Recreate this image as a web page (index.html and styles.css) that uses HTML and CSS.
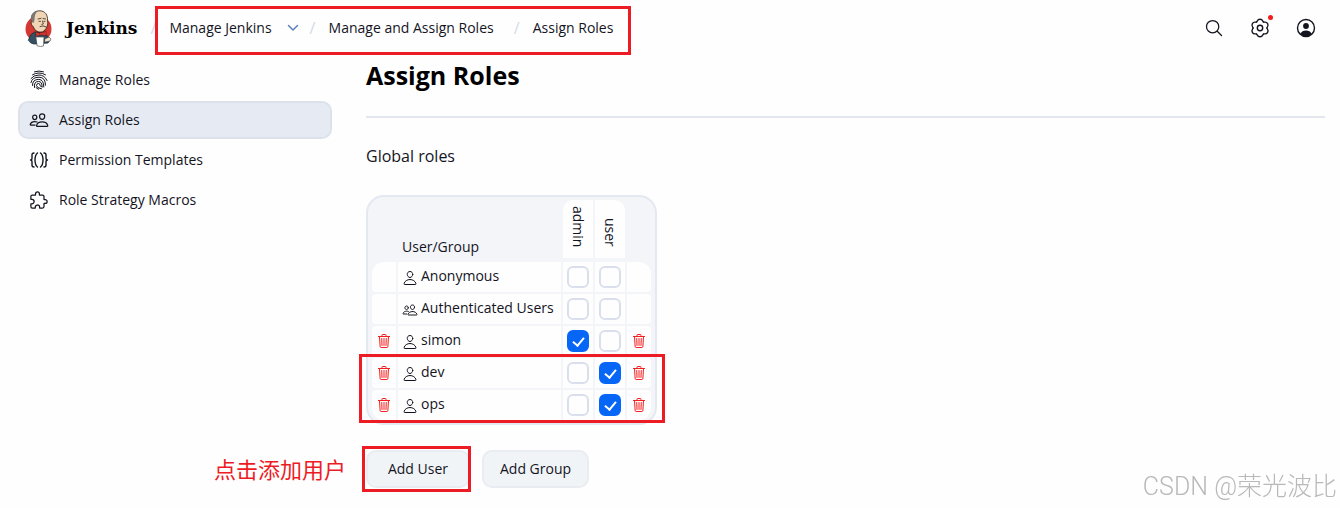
FILE: index.html
```
<!DOCTYPE html>
<html lang="en">
<head>
    <meta charset="UTF-8">
    <meta name="viewport" content="width=device-width, initial-scale=1.0">
    <title>Assign Roles - Jenkins</title>
    <link rel="stylesheet" href="styles.css">
</head>
<body>
    <!-- Shared icons -->
    <svg class="sprite" aria-hidden="true">
        <symbol id="person" viewBox="0 0 512 512">
            <path d="M344 144c-3.92 52.87-44 96-88 96s-84.15-43.12-88-96c-4-55 35-96 88-96s92 42 88 96z"/>
            <path d="M256 304c-87 0-175.3 48-191.64 138.6C62.39 453.52 68.57 464 80 464h352c11.44 0 17.62-10.48 15.65-21.4C431.3 352 343 304 256 304z"/>
        </symbol>
        <symbol id="people" viewBox="0 0 512 512">
            <path d="M402 168c-2.93 40.67-33.1 72-66 72s-63.12-31.32-66-72c-3-42.31 26.37-72 66-72s69 30.46 66 72z"/>
            <path d="M336 304c-65.17 0-127.84 32.37-143.54 95.41-2.08 8.34 3.15 16.59 11.72 16.59h263.65c8.57 0 13.77-8.25 11.72-16.59C463.85 335.36 401.18 304 336 304z"/>
            <path d="M200 185.94c-2.34 32.48-26.72 58.06-53 58.06s-50.7-25.57-53-58.06C91.61 152.15 115.34 128 147 128s55.39 24.77 53 57.94z"/>
            <path d="M206 306c-18.05-8.27-37.93-11.45-59-11.45-52 0-102.1 25.85-114.65 76.2-1.65 6.66 2.53 13.25 9.37 13.25H154"/>
        </symbol>
        <symbol id="trash" viewBox="0 0 512 512">
            <path d="M112 112l20 320c.95 18.49 14.4 32 32 32h184c17.67 0 30.87-13.51 32-32l20-320"/>
            <path d="M80 112h352M192 112V72a23.93 23.93 0 0124-24h80a23.93 23.93 0 0124 24v40M256 176v224M184 176l8 224M328 176l-8 224"/>
        </symbol>
        <symbol id="tooth" viewBox="0 0 20 20">
            <path d="M6.500 3.940C7.600 3.600 6.900 1.200 10 1.200S12.400 3.600 13.500 3.940"/>
        </symbol>
    </svg>

    <header class="header">
        <a class="brand" href="#">
            <svg class="logo" viewBox="0 0 27 37" aria-hidden="true">
                <circle cx="13.5" cy="19" r="13" fill="#d33833"/>
                <path d="M3.500 30l2-5 4-3 8 1 5 3 2.500 4-2 3-14 1-3-1z" fill="#335061" stroke="#1d2b35" stroke-width=".8"/>
                <path d="M6.500 11C5 4 10 .6 15 .8c5 .2 8 4 7.500 10 1 4-1 9-5 11-4 1-8-1-9-5-2-1-3-4-2-5.800z" fill="#f0d6b7" stroke="#2b2119" stroke-width=".8"/>
                <path d="M6.600 12C5 5 8 1 13 1 10 3 9.500 6 9.500 10l-1 3z" fill="#7b7772"/>
                <path d="M13 9l3-.7M18 8.500l2.500.5M14 11.300h1.500M19 11.300h1M17.500 11l.8 3-1.500.5M15 16.500q3-1.500 6 .3" fill="none" stroke="#4a3a2e" stroke-width=".9"/>
                <path d="M11 22l4 1.500v-1h3l3-1.500v5l-3-1h-3l-4 1.500z" fill="#d33833" stroke="#5d1512" stroke-width=".5"/>
                <path d="M11 27h8l-.5 9q-3 1-6 0z" fill="#fff" stroke="#555" stroke-width=".7"/>
                <path d="M20 29l4-2 2 2-1 2-5 1z" fill="#f7e4cd" stroke="#444" stroke-width=".6"/>
            </svg>
            <span>Jenkins</span>
        </a>
        <nav class="breadcrumbs" aria-label="Breadcrumb">
            <span class="slash">/</span>
            <a href="#">Manage Jenkins</a>
            <svg class="chevron" viewBox="0 0 12 12" aria-hidden="true"><path d="M1.500 3.500l4.500 4.500 4.500-4.500"/></svg>
            <span class="slash">/</span>
            <a href="#">Manage and Assign Roles</a>
            <span class="slash">/</span>
            <a href="#">Assign Roles</a>
            <span class="mark mark-path"></span>
        </nav>
        <div class="actions">
            <button type="button" aria-label="Search">
                <svg class="icon" viewBox="0 0 512 512"><path d="M221.090 64a157.090 157.090 0 10157.090 157.090A157.100 157.100 0 00221.090 64zM338.290 338.290L448 448"/></svg>
            </button>
            <button type="button" aria-label="Settings">
                <svg class="icon thin" viewBox="0 0 20 20">
                    <use href="#tooth"/>
                    <use href="#tooth" transform="rotate(60 10 10)"/>
                    <use href="#tooth" transform="rotate(120 10 10)"/>
                    <use href="#tooth" transform="rotate(180 10 10)"/>
                    <use href="#tooth" transform="rotate(240 10 10)"/>
                    <use href="#tooth" transform="rotate(300 10 10)"/>
                    <circle cx="10" cy="10" r="2.700"/>
                </svg>
                <span class="dot"></span>
            </button>
            <button type="button" aria-label="Account">
                <svg class="icon thin" viewBox="0 0 20 20"><circle cx="10" cy="10" r="8.500"/><circle class="solid" cx="10" cy="8" r="2.900"/><path class="solid" d="M4.200 15.800Q6 12.400 10 12.400t5.800 3.400Q13.500 18.500 10 18.500t-5.800-2.700z"/></svg>
            </button>
        </div>
    </header>

    <div class="page">
        <nav class="sidebar" aria-label="Roles">
            <a href="#">
                <svg class="icon finger" viewBox="0 0 20 20"><path d="M5.500 1.800Q10 .2 14.500 1.800M3.500 4.800Q10 1 16.500 4.800M2 8.500Q4.500 5 10 5t8 5.500M2 12.500Q3 7.200 10 7.200q6.500 0 6.500 8M3.500 15.500Q3.200 9.400 9.800 9.400q5 0 5 7.600M5.500 17.500Q4.500 11.500 9.500 11.500q3.500 0 3.500 4.500M12.500 18.800Q7.500 18 7.500 15.500q0-2 2-2 1.500 0 1.500 1.700t2.500 1.800M9.500 19.200Q7.800 18.500 7 17.500"/></svg>
                Manage Roles
            </a>
            <a class="active" href="#">
                <svg class="icon"><use href="#people"/></svg>
                Assign Roles
            </a>
            <a href="#">
                <svg class="icon thin" viewBox="0 0 20 20"><path d="M5 3Q3 3 3 5v3q0 2-1.500 2Q3 10 3 12v3q0 2 2 2M15 3q2 0 2 2v3q0 2 1.500 2Q17 10 17 12v3q0 2-2 2M8.500 3Q6 5 6 10t2.500 7M11.500 3Q14 5 14 10t-2.500 7"/></svg>
                Permission Templates
            </a>
            <a href="#">
                <svg class="icon" viewBox="0 0 512 512"><path d="M413.660 246.100H386a2 2 0 01-2-2v-77.240A38.860 38.860 0 00345.140 128H267.900a2 2 0 01-2-2V98.340c0-27.140-21.500-49.860-48.640-50.330a49.530 49.530 0 00-50.400 49.510V126a2 2 0 01-2 2H87.620A39.740 39.740 0 0048 167.620V238a2 2 0 002 2h26.910c29.370 0 53.680 25.480 54.090 54.850.42 29.870-23.510 57.150-53.290 57.150H50a2 2 0 00-2 2v70.380A39.740 39.740 0 0087.620 464H158a2 2 0 002-2v-20.930c0-30.280 24.750-56.350 55-57.060 30.100-.7 57 20.310 57 50.280V462a2 2 0 002 2h71.140A38.860 38.860 0 00384 425.140v-78a2 2 0 012-2h28.480c27.630 0 49.520-22.670 49.520-50.400s-23.200-48.640-50.340-48.640z"/></svg>
                Role Strategy Macros
            </a>
        </nav>

        <main class="content">
            <h1>Assign Roles</h1>
            <h2>Global roles</h2>

            <div class="table-box">
                <table>
                    <thead>
                        <tr>
                            <td></td>
                            <th class="name" scope="col">User/Group</th>
                            <th scope="col"><span class="role first">admin</span></th>
                            <th scope="col"><span class="role last">user</span></th>
                            <td></td>
                        </tr>
                    </thead>
                    <tbody>
                        <tr>
                            <td></td>
                            <td class="name"><svg class="small"><use href="#person"/></svg>Anonymous</td>
                            <td><input type="checkbox" aria-label="Anonymous admin"></td>
                            <td><input type="checkbox" aria-label="Anonymous user"></td>
                            <td></td>
                        </tr>
                        <tr>
                            <td></td>
                            <td class="name"><svg class="small"><use href="#people"/></svg>Authenticated Users</td>
                            <td><input type="checkbox" aria-label="Authenticated Users admin"></td>
                            <td><input type="checkbox" aria-label="Authenticated Users user"></td>
                            <td></td>
                        </tr>
                        <tr>
                            <td><button type="button" class="delete" aria-label="Delete simon"><svg class="small"><use href="#trash"/></svg></button></td>
                            <td class="name"><svg class="small"><use href="#person"/></svg>simon</td>
                            <td><input type="checkbox" aria-label="simon admin" checked></td>
                            <td><input type="checkbox" aria-label="simon user"></td>
                            <td><button type="button" class="delete" aria-label="Delete simon"><svg class="small"><use href="#trash"/></svg></button></td>
                        </tr>
                        <tr>
                            <td><button type="button" class="delete" aria-label="Delete dev"><svg class="small"><use href="#trash"/></svg></button></td>
                            <td class="name"><svg class="small"><use href="#person"/></svg>dev</td>
                            <td><input type="checkbox" aria-label="dev admin"></td>
                            <td><input type="checkbox" aria-label="dev user" checked></td>
                            <td><button type="button" class="delete" aria-label="Delete dev"><svg class="small"><use href="#trash"/></svg></button></td>
                        </tr>
                        <tr>
                            <td><button type="button" class="delete" aria-label="Delete ops"><svg class="small"><use href="#trash"/></svg></button></td>
                            <td class="name"><svg class="small"><use href="#person"/></svg>ops</td>
                            <td><input type="checkbox" aria-label="ops admin"></td>
                            <td><input type="checkbox" aria-label="ops user" checked></td>
                            <td><button type="button" class="delete" aria-label="Delete ops"><svg class="small"><use href="#trash"/></svg></button></td>
                        </tr>
                    </tbody>
                </table>
                <span class="mark mark-rows"></span>
            </div>

            <div class="buttons">
                <span class="note" lang="zh">点击添加用户</span>
                <button type="button">Add User</button>
                <button type="button">Add Group</button>
                <span class="mark mark-add"></span>
            </div>
        </main>
    </div>

    <div class="watermark" lang="zh">CSDN @荣光波比</div>
</body>
</html>
```

FILE: styles.css
```
* {
    box-sizing: border-box;
}
body {
    margin: 0;
    background-color: #fefefe;
    color: #14141f;
    font-family: "Open Sans", "Noto Sans CJK SC", sans-serif;
    font-size: 14px;
    line-height: 20px;
}
a {
    color: inherit;
    text-decoration: none;
}
button {
    font: inherit;
    color: inherit;
    cursor: pointer;
}
svg {
    fill: none;
    stroke: currentColor;
    stroke-width: 32;
    stroke-linecap: round;
    stroke-linejoin: round;
    flex: none;
}
.sprite {
    display: none;
}
.icon {
    display: block;
    width: 20px;
    height: 20px;
}
.thin {
    stroke-width: 1.4;
}
.finger {
    stroke-width: 1;
}
.solid {
    fill: currentColor;
    stroke: none;
}

/* Header */
.header {
    display: flex;
    align-items: center;
    height: 56px;
    padding: 0 24px 0 25px;
}
.brand {
    display: flex;
    align-items: center;
    gap: 14px;
    font-family: "DejaVu Serif", serif;
    font-size: 17px;
    font-weight: bold;
    color: #000;
}
.logo {
    width: 27px;
    height: 37px;
    stroke: none;
}
.breadcrumbs {
    position: relative;
    display: flex;
    align-items: center;
    margin-left: 13px;
}
.slash {
    width: 6px;
    margin-right: 13px;
    font-size: 16px;
    color: #d3dae8;
}
.breadcrumbs a + .slash {
    margin-left: 20px;
}
.chevron {
    width: 12px;
    height: 12px;
    margin: 0 11px 0 15px;
    stroke: #5b82bd;
    stroke-width: 1.5;
}
.actions {
    display: flex;
    gap: 26px;
    margin-left: auto;
}
.actions button {
    position: relative;
    padding: 0;
    border: 0;
    background: none;
}
.dot {
    position: absolute;
    top: -3px;
    right: -3px;
    width: 5px;
    height: 5px;
    border-radius: 50%;
    background-color: #f51c1c;
}

/* Page */
.page {
    display: flex;
    gap: 34px;
    padding: 5px 15px 18px 18px;
}
.sidebar {
    display: flex;
    flex-direction: column;
    flex: none;
    gap: 2px;
    width: 314px;
}
.sidebar a {
    display: flex;
    align-items: center;
    gap: 10px;
    height: 38px;
    padding: 0 9px;
    border: 2px solid transparent;
    border-radius: 10px;
}
.sidebar .active {
    border-color: #dce2ec;
    background-color: #e6ebf3;
}
.content {
    flex: 1;
    min-width: 0;
}
h1 {
    margin: 0;
    padding-bottom: 27px;
    border-bottom: 2px solid #e3e7ed;
    font-size: 25px;
    line-height: 28px;
    color: #000;
}
h2 {
    margin: 28px 0 29px;
    font-size: 16px;
    font-weight: normal;
    line-height: 20px;
}

/* Roles table */
.table-box {
    position: relative;
    width: fit-content;
    padding: 1px 2px;
    border: 2px solid #e3e8f1;
    border-radius: 18px;
    background-color: #f4f5f9;
}
table {
    border-spacing: 2px;
}
th, td {
    height: 30px;
    min-width: 24px;
    padding: 0;
    font-weight: normal;
    text-align: center;
}
th {
    height: 60px;
    vertical-align: top;
}
td:first-child, td:last-child {
    width: 24px;
}
.name {
    min-width: 163px;
    padding: 0 4px 2px;
    text-align: left;
    white-space: nowrap;
}
th.name {
    padding-bottom: 3px;
    vertical-align: bottom;
}
.name .small {
    margin-right: 3px;
    vertical-align: -5px;
}
tbody td {
    background-color: #fefefe;
}
tbody td:first-child {
    border-radius: 4px 0 0 4px;
}
tbody td:last-child {
    border-radius: 0 4px 4px 0;
}
tbody tr:first-child td:first-child {
    border-top-left-radius: 12px;
}
tbody tr:first-child td:last-child {
    border-top-right-radius: 12px;
}
tbody tr:last-child td:first-child {
    border-bottom-left-radius: 12px;
}
tbody tr:last-child td:last-child {
    border-bottom-right-radius: 12px;
}
.role {
    display: flex;
    align-items: center;
    justify-content: flex-end;
    width: 30px;
    height: 58px;
    padding-bottom: 11px;
    background-color: #fefefe;
    writing-mode: vertical-rl;
}
.first {
    border-top-left-radius: 10px;
}
.last {
    border-top-right-radius: 10px;
}
.small {
    width: 16px;
    height: 16px;
}
.delete {
    display: block;
    margin: 0 auto;
    padding: 0;
    border: 0;
    background: none;
    color: #f51c1c;
}
.delete svg {
    display: block;
}
input {
    display: block;
    position: relative;
    width: 22px;
    height: 22px;
    margin: 0 auto;
    border: 2px solid #d9dfeb;
    border-radius: 6px;
    background-color: #fefefe;
    appearance: none;
}
input:checked {
    border-color: #0667f7;
    background-color: #0667f7;
}
input:checked::after {
    content: "";
    position: absolute;
    top: 3px;
    left: 6px;
    width: 5px;
    height: 9px;
    border: solid #fff;
    border-width: 0 2px 2px 0;
    transform: rotate(40deg);
}

/* Buttons */
.buttons {
    position: relative;
    display: flex;
    gap: 12px;
    width: fit-content;
    margin-top: 25px;
}
.buttons button {
    min-width: 104px;
    height: 38px;
    padding: 0 16px;
    border: 2px solid #e9edf1;
    border-radius: 10px;
    background-color: #f1f4f7;
}

/* Annotations */
.mark {
    position: absolute;
    border: 3px solid #ed1c24;
    pointer-events: none;
}
.mark-path {
    inset: -12px -18px -17px 5px;
}
.mark-rows {
    left: -9px;
    right: -10px;
    bottom: 0;
    height: 69px;
}
.mark-add {
    top: -4px;
    left: -4px;
    width: 109px;
    height: 46px;
}
.note {
    position: absolute;
    top: 3px;
    right: 100%;
    margin-right: 20px;
    font-size: 22px;
    line-height: 32px;
    white-space: nowrap;
    color: #ed1c24;
}
.watermark {
    position: fixed;
    right: 3px;
    bottom: 4px;
    font-family: Roboto, "Noto Sans CJK SC", sans-serif;
    font-size: 25px;
    font-weight: 300;
    line-height: 34px;
    color: #b9b9b9;
}
```
